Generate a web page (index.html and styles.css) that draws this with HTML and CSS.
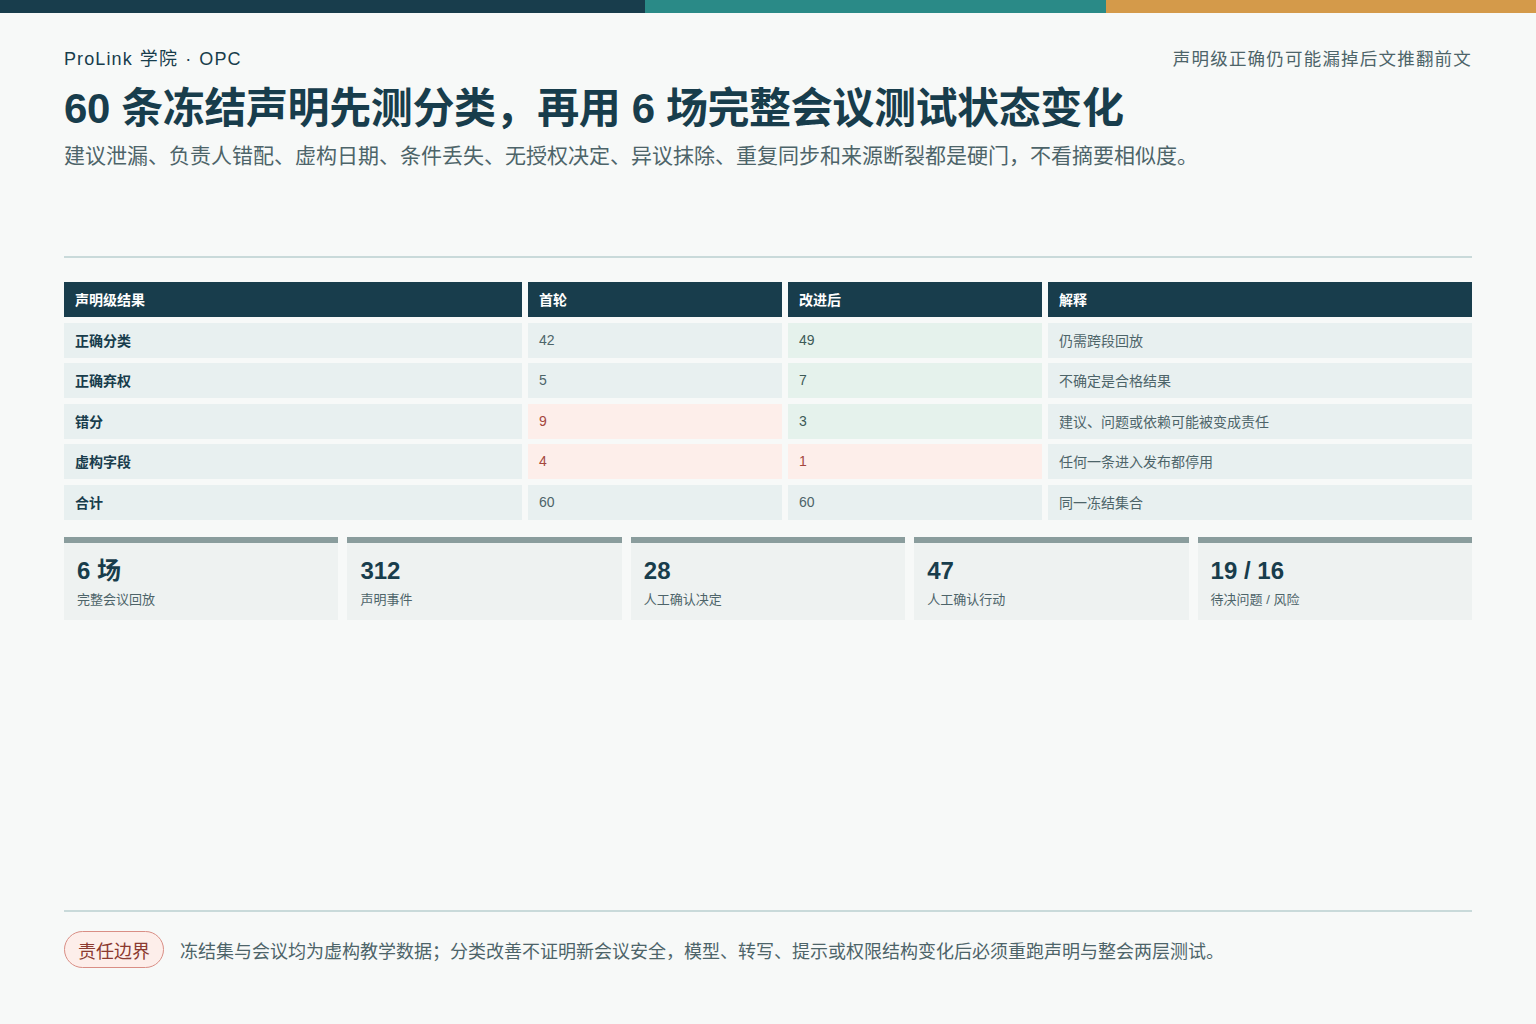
FILE: index.html
```html
<!DOCTYPE html>
<html lang="zh-CN">
<head>
<meta charset="utf-8">
<title>ProLink 学院 · OPC</title>
<link rel="stylesheet" href="styles.css">
</head>
<body>
<div class="topbar">
  <span class="seg seg-dark"></span>
  <span class="seg seg-teal"></span>
  <span class="seg seg-orange"></span>
</div>
<div class="page">
  <header class="head">
    <div class="head-row">
      <div class="brand">ProLink 学院 · OPC</div>
      <div class="kicker">声明级正确仍可能漏掉后文推翻前文</div>
    </div>
    <h1 class="title">60 条冻结声明先测分类，再用 6 场完整会议测试状态变化</h1>
    <p class="subtitle">建议泄漏、负责人错配、虚构日期、条件丢失、无授权决定、异议抹除、重复同步和来源断裂都是硬门，不看摘要相似度。</p>
  </header>

  <main class="main">
    <div class="grid">
      <div class="th">声明级结果</div>
      <div class="th">首轮</div>
      <div class="th">改进后</div>
      <div class="th">解释</div>

      <div class="td label">正确分类</div>
      <div class="td">42</div>
      <div class="td good">49</div>
      <div class="td">仍需跨段回放</div>

      <div class="td label">正确弃权</div>
      <div class="td">5</div>
      <div class="td good">7</div>
      <div class="td">不确定是合格结果</div>

      <div class="td label">错分</div>
      <div class="td bad">9</div>
      <div class="td good">3</div>
      <div class="td">建议、问题或依赖可能被变成责任</div>

      <div class="td label">虚构字段</div>
      <div class="td bad">4</div>
      <div class="td bad">1</div>
      <div class="td">任何一条进入发布都停用</div>

      <div class="td label">合计</div>
      <div class="td">60</div>
      <div class="td">60</div>
      <div class="td">同一冻结集合</div>
    </div>

    <div class="stats">
      <div class="stat"><div class="stat-value">6 场</div><div class="stat-label">完整会议回放</div></div>
      <div class="stat"><div class="stat-value">312</div><div class="stat-label">声明事件</div></div>
      <div class="stat"><div class="stat-value">28</div><div class="stat-label">人工确认决定</div></div>
      <div class="stat"><div class="stat-value">47</div><div class="stat-label">人工确认行动</div></div>
      <div class="stat"><div class="stat-value">19 / 16</div><div class="stat-label">待决问题 / 风险</div></div>
    </div>
  </main>

  <footer class="foot">
    <span class="pill">责任边界</span>
    <span class="foot-text">冻结集与会议均为虚构教学数据；分类改善不证明新会议安全，模型、转写、提示或权限结构变化后必须重跑声明与整会两层测试。</span>
  </footer>
</div>
</body>
</html>
```

FILE: styles.css
```css
* { box-sizing: border-box; }

html, body {
  margin: 0;
  padding: 0;
  height: 100%;
}

body {
  background: #f7f9f8;
  color: #183d4c;
  font-family: "Liberation Sans", "Noto Sans CJK SC", sans-serif;
  display: flex;
  flex-direction: column;
  min-height: 1024px;
}

.topbar {
  display: flex;
  height: 13px;
  flex: none;
}
.seg { display: block; height: 100%; }
.seg-dark { width: 645px; background: #183d4c; }
.seg-teal { width: 461px; background: #2a8a87; }
.seg-orange { flex: 1; background: #d49a4a; }

.page {
  flex: 1;
  display: flex;
  flex-direction: column;
  padding: 0 64px;
}

.head {
  padding-top: 32px;
  padding-bottom: 85px;
  border-bottom: 2px solid #c9dada;
}

.head-row {
  display: flex;
  justify-content: space-between;
  align-items: center;
  height: 24px;
}

.brand {
  font-size: 18px;
  color: #183d4c;
  letter-spacing: 1.1px;
  word-spacing: 1px;
}

.kicker {
  font-size: 17.5px;
  color: #4d6469;
  letter-spacing: 1.2px;
}

.title {
  margin: 14px 0 0;
  font-size: 42px;
  line-height: 52px;
  font-weight: 700;
  color: #183d4c;
  letter-spacing: -0.4px;
}

.subtitle {
  margin: 6px 0 0;
  font-size: 21px;
  line-height: 30px;
  color: #4d6469;
}

.main {
  padding-top: 24px;
}

.grid {
  display: grid;
  grid-template-columns: 458fr 254fr 254fr 424fr;
  grid-auto-rows: 35px;
  column-gap: 6px;
  row-gap: 5.5px;
}

.th, .td {
  display: flex;
  align-items: center;
  padding: 0 11px 1px;
  font-size: 14px;
}

.th {
  background: #183d4c;
  color: #ffffff;
  font-weight: 700;
}

.td {
  background: #e8f0f0;
  color: #4d6469;
}

.td.label {
  color: #183d4c;
  font-weight: 700;
}

.td.good {
  background: #e5f2ec;
  color: #3d5a57;
}

.td.bad {
  background: #fdeeea;
  color: #a4473d;
}

.stats {
  display: grid;
  grid-template-columns: repeat(5, 1fr);
  gap: 9px;
  margin-top: 17px;
}

.stat {
  background: #eef2f1;
  border-top: 6px solid #8a9d9d;
  height: 83px;
  padding: 13px 13px 0;
}

.stat-value {
  font-size: 24px;
  line-height: 30px;
  font-weight: 700;
  color: #183d4c;
}

.stat-label {
  margin-top: 5px;
  font-size: 13px;
  line-height: 18px;
  color: #4d6469;
}

.foot {
  margin-top: auto;
  border-top: 2px solid #c9dada;
  display: flex;
  align-items: center;
  gap: 16px;
  padding: 19px 0 56px;
}

.pill {
  display: inline-flex;
  align-items: center;
  height: 37px;
  padding: 0 13px;
  border: 1px solid #d98e85;
  border-radius: 19px;
  background: #fdeeea;
  color: #8b3a30;
  font-size: 18px;
}

.foot-text {
  font-size: 18px;
  color: #4d6469;
}
```
